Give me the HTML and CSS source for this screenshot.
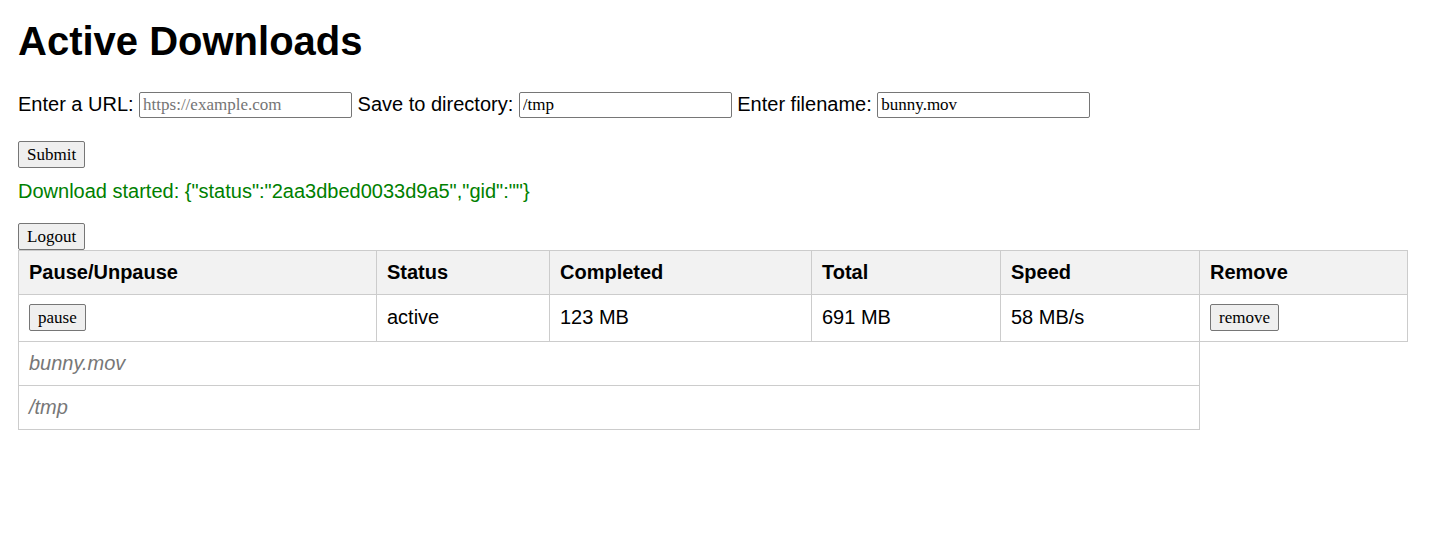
FILE: index.html
```html
<!DOCTYPE html>
<html lang="en">
<head>
<meta charset="utf-8">
<title>Active Downloads</title>
<link rel="stylesheet" href="styles.css">
</head>
<body>
<h1 class="title">Active Downloads</h1>
<form class="dl-form">
  <div class="fields">
    <label class="lbl" for="url">Enter a URL:</label>
    <input class="field" id="url" type="text" placeholder="https://example.com">
    <label class="lbl" for="dir">Save to directory:</label>
    <input class="field" id="dir" type="text" value="/tmp">
    <label class="lbl" for="fn">Enter filename:</label>
    <input class="field" id="fn" type="text" value="bunny.mov">
  </div>
  <div class="submit-row"><button class="btn" type="button">Submit</button></div>
</form>
<p class="msg">Download started: {"status":"2aa3dbed0033d9a5","gid":""}</p>
<div class="logout-row"><button class="btn" type="button">Logout</button></div>
<table class="downloads">
  <colgroup>
    <col class="c1"><col class="c2"><col class="c3"><col class="c4"><col class="c5"><col class="c6">
  </colgroup>
  <thead>
    <tr>
      <th>Pause/Unpause</th>
      <th>Status</th>
      <th>Completed</th>
      <th>Total</th>
      <th>Speed</th>
      <th>Remove</th>
    </tr>
  </thead>
  <tbody>
    <tr class="main-row">
      <td><button class="btn" type="button">pause</button></td>
      <td>active</td>
      <td>123 MB</td>
      <td>691 MB</td>
      <td>58 MB/s</td>
      <td><button class="btn" type="button">remove</button></td>
    </tr>
    <tr class="meta-row">
      <td class="meta" colspan="5">bunny.mov</td>
    </tr>
    <tr class="meta-row">
      <td class="meta" colspan="5">/tmp</td>
    </tr>
  </tbody>
</table>
</body>
</html>
```
FILE: styles.css
```css
html, body {
  background: #ffffff;
}
body {
  margin: 0;
  padding: 18px;
  font-family: "Liberation Sans", Arial, sans-serif;
  font-size: 20px;
  color: #000000;
}
.title {
  margin: 0 0 27px;
  font-size: 40px;
  font-weight: bold;
  line-height: 46px;
}
.dl-form {
  margin: 0;
}
.fields {
  display: flex;
  align-items: center;
  gap: 5.5px;
  height: 28px;
}
.lbl {
  font-size: 20px;
  line-height: 23px;
  position: relative;
  top: -1px;
}
.field {
  box-sizing: border-box;
  width: 213px;
  height: 26px;
  margin: 0;
  padding: 1px 3px;
  border: 1px solid #767676;
  border-radius: 2px;
  font-family: "Liberation Serif", "Times New Roman", serif;
  font-size: 17px;
  color: #000000;
  background: #ffffff;
}
.field::placeholder {
  color: #757575;
}
.submit-row {
  margin-top: 22px;
  height: 27px;
}
.btn {
  box-sizing: border-box;
  height: 27px;
  margin: 0;
  padding: 2px 8px;
  border: 1px solid #767676;
  border-radius: 2px;
  background: #efefef;
  font-family: "Liberation Serif", "Times New Roman", serif;
  font-size: 17px;
  line-height: 19px;
  color: #000000;
  vertical-align: middle;
}
.msg {
  margin: 12px 0 20px;
  color: #008000;
  font-size: 20px;
  line-height: 23px;
}
.logout-row {
  height: 27px;
}
.downloads {
  border-collapse: collapse;
  table-layout: fixed;
  width: 1389px;
}
.c1 { width: 358px; }
.c2 { width: 173px; }
.c3 { width: 262px; }
.c4 { width: 189px; }
.c5 { width: 199px; }
.c6 { width: 208px; }
.downloads th,
.downloads td {
  border: 1px solid #cccccc;
  padding: 10px;
  text-align: left;
  font-size: 20px;
  line-height: 23px;
}
.downloads th {
  background: #f2f2f2;
  font-weight: bold;
}
.main-row td {
  height: 27px;
  padding-top: 9px;
  padding-bottom: 10px;
}
.meta {
  color: #777777;
  font-style: italic;
}
```
